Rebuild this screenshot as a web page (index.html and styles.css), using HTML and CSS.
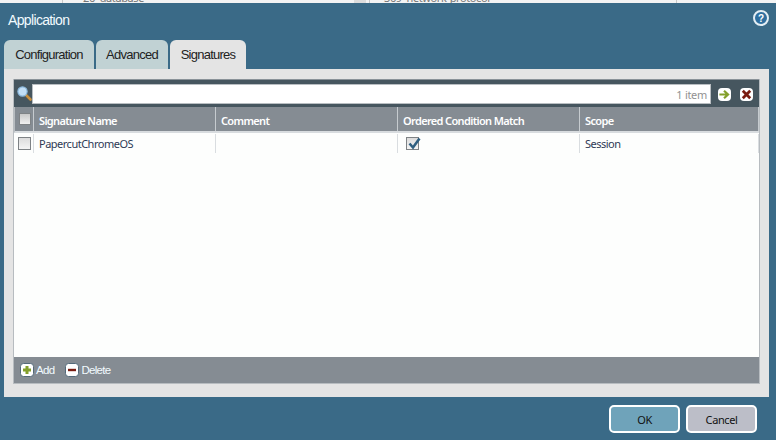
FILE: index.html
```html
<!DOCTYPE html>
<html lang="en">
<head>
<meta charset="utf-8">
<title>Application</title>
<link rel="stylesheet" href="styles.css">
</head>
<body>
<div class="backdrop">
  <span class="bd-cell bd-a"><span class="bd-text">26&nbsp; database</span></span>
  <span class="bd-thumb"></span>
  <span class="bd-cell bd-b"><span class="bd-text">369&nbsp; network-protocol</span></span>
  <span class="bd-cell bd-c"></span>
</div>
<div class="dialog">
  <header class="titlebar">
    <span class="title">Application</span>
    <svg class="help" width="16" height="16" viewBox="0 0 16 16"><circle cx="8" cy="8" r="7" fill="#2f6f9f" stroke="#e4eef4" stroke-width="2"/><text x="8" y="11.5" text-anchor="middle" class="help-q">?</text></svg>
  </header>
  <nav class="tabs">
    <span class="tab tab-config">Configuration</span>
    <span class="tab tab-adv">Advanced</span>
    <span class="tab tab-sig active">Signatures</span>
  </nav>
  <section class="panel">
    <div class="grid">
      <div class="toolbar">
        <svg class="search" width="15" height="15" viewBox="0 0 15 15"><path d="M9 9l4.5 4.5" stroke="#c98f3c" stroke-width="2.6" stroke-linecap="round"/><circle cx="5.5" cy="5.5" r="4.6" fill="#c2dff6" stroke="#8dbbe0" stroke-width="1.2"/></svg>
        <div class="filter"><span class="count">1 item</span></div>
        <span class="tool-btn"><svg width="13" height="13" viewBox="0 0 14 14"><path d="M1.5 7h8M6.5 3L10.8 7l-4.3 4" fill="none" stroke="#84a02c" stroke-width="2.4"/></svg></span>
        <span class="tool-btn"><svg width="13" height="13" viewBox="0 0 14 14"><path d="M3 3l8 8M11 3l-8 8" stroke="#7a1c10" stroke-width="3"/></svg></span>
      </div>
      <div class="row head">
        <div class="cell c-check"><span class="box head-box"></span></div>
        <div class="cell c-name">Signature Name</div>
        <div class="cell c-comment">Comment</div>
        <div class="cell c-order">Ordered Condition Match</div>
        <div class="cell c-scope">Scope</div>
      </div>
      <div class="row body-row">
        <div class="cell c-check"><span class="box"></span></div>
        <div class="cell c-name">PapercutChromeOS</div>
        <div class="cell c-comment"></div>
        <div class="cell c-order"><span class="box checked"><svg width="16" height="16" viewBox="0 0 16 16"><path d="M3.5 7.5l3.5 4L13.5 2.5" fill="none" stroke="#2f5f80" stroke-width="2.6"/></svg></span></div>
        <div class="cell c-scope">Session</div>
      </div>
      <div class="fill"></div>
      <div class="actions">
        <span class="action"><svg width="14" height="14" viewBox="0 0 14 14"><rect x="0.5" y="0.5" width="13" height="13" rx="3" fill="#fff" stroke="#546a7a"/><path d="M7 3v8M3 7h8" stroke="#84a02c" stroke-width="3"/></svg>Add</span>
        <span class="action"><svg width="14" height="14" viewBox="0 0 14 14"><rect x="0.5" y="0.5" width="13" height="13" rx="3" fill="#fff" stroke="#546a7a"/><path d="M3 7h8" stroke="#7a1c10" stroke-width="2.4"/></svg>Delete</span>
      </div>
    </div>
  </section>
  <footer class="buttons">
    <span class="btn ok">OK</span>
    <span class="btn cancel">Cancel</span>
  </footer>
</div>
</body>
</html>
```
FILE: styles.css
```css
* { box-sizing: border-box; }
html, body { margin: 0; height: 100%; }
body {
  width: 776px; height: 440px; overflow: hidden;
  display: flex; flex-direction: column;
  background: #3a6a87;
  font-family: "Liberation Sans", Arial, sans-serif;
}
.backdrop { height: 3px; flex: none; background: #f3f3f3; display: flex; overflow: hidden; }
.bd-cell { height: 3px; overflow: hidden; font: 11px "Noto Sans", sans-serif; color: #777; border-left: 1px solid #c8c8c8; letter-spacing: -0.4px; }
.bd-a { margin-left: 62px; width: 292px; padding-left: 20px; }
.bd-thumb { width: 12px; height: 3px; background: #dcdcdc; margin-right: 3px; }
.bd-b { width: 307px; padding-left: 14px; }
.bd-c { flex: 1; }
.bd-text { display: block; margin-top: -10px; white-space: nowrap; }
.dialog { flex: 1; display: flex; flex-direction: column; min-height: 0; }
.titlebar { height: 37px; flex: none; display: flex; align-items: center; justify-content: space-between; padding: 0 8px 3px 8px; }
.title { color: #f2fbff; font-size: 14px; letter-spacing: -0.65px; }
.help { display: block; margin-top: -5px; margin-right: -1px; }
.help-q { fill: #fff; font: bold 10px "Liberation Sans", sans-serif; }
.tabs { height: 29px; flex: none; display: flex; gap: 2px; padding-left: 4px; }
.tab {
  display: flex; align-items: center; justify-content: center;
  background: #c1d2d4; color: #222; font-size: 13px; letter-spacing: -0.75px;
  border-radius: 6px 6px 0 0; padding-bottom: 1px;
}
.tab-config { width: 90px; }
.tab-adv { width: 72px; }
.tab-sig { width: 76px; }
.tab.active { background: #e4e4e4; }
.panel { width: 765px; margin-left: 4px; height: 328px; flex: none; background: #e4e4e4; padding: 10px 9px 13px 9px; }
.grid { height: 100%; display: flex; flex-direction: column; background: #fdfefd; border: 1px solid #b7bcc0; border-top: none; }
.toolbar { height: 28px; flex: none; background: #46565f; border-top: 1px solid #8a9298; display: flex; align-items: center; padding: 1px 5px 0 3px; }
.search { flex: none; margin-top: -2px; }
.filter { width: 679px; height: 20px; margin: 0 7px 0 0; background: #fff; border: 1px solid #b9bec2; display: flex; align-items: center; justify-content: flex-end; padding-right: 3px; }
.count { font: 11px "Noto Sans", sans-serif; color: #929292; letter-spacing: -0.3px; }
.tool-btn { width: 13px; height: 13px; margin-right: 9px; background: #fff; border-radius: 4px; display: flex; }
.tool-btn:last-child { margin-right: 0; }
.row { display: flex; flex: none; }
.head { height: 26px; background: #858c93; color: #fff; border-bottom: 2px solid #d8dcdf; border-left: 1px solid #b7bcc0; }
.body-row { height: 20px; color: #2f3a55; border-left: 1px solid transparent; padding-top: 1px; }
.cell { font: 11px "Noto Sans", sans-serif; display: flex; align-items: center; padding-left: 5px; border-right: 1px solid #d9dde0; white-space: nowrap; letter-spacing: -0.5px; }
.head .cell { font-weight: 600; padding-top: 2px; border-right-color: #c6cbcf; color: #fff; letter-spacing: -0.65px; }
.c-check { width: 19px; padding-left: 3px; flex: none; }
.c-name { width: 182px; flex: none; }
.c-comment { width: 182px; flex: none; }
.c-order { width: 182px; flex: none; padding-left: 5px; }
.c-scope { flex: 1; }
.box { width: 13px; height: 13px; background: linear-gradient(#dcdcdc, #f4f4f4); border: 1px solid #7e8285; display: block; position: relative; }
.head-box { width: 12px; height: 12px; background: linear-gradient(#c9c9c9, #f0f0f0); margin: -3px 0 0 1px; }
.checked { margin-left: 3px; }
.checked svg { position: absolute; left: -1px; top: -2px; }
.fill { flex: 1; }
.actions { height: 26px; flex: none; background: #858c93; display: flex; align-items: center; gap: 11px; padding-left: 6px; }
.action { display: flex; align-items: center; gap: 2px; color: #f2fbff; font-size: 11.5px; letter-spacing: -0.7px; }
.buttons { flex: 1; display: flex; justify-content: flex-end; align-items: flex-start; gap: 6px; padding: 8px 19px 0 0; }
.btn { width: 71px; height: 28px; border: 2px solid #fff; border-radius: 5px; display: flex; align-items: center; justify-content: center; font: 11px "Noto Sans", sans-serif; color: #111; letter-spacing: -0.4px; }
.ok { background: #6fa3ba; }
.cancel { background: #bcbec8; }
```
